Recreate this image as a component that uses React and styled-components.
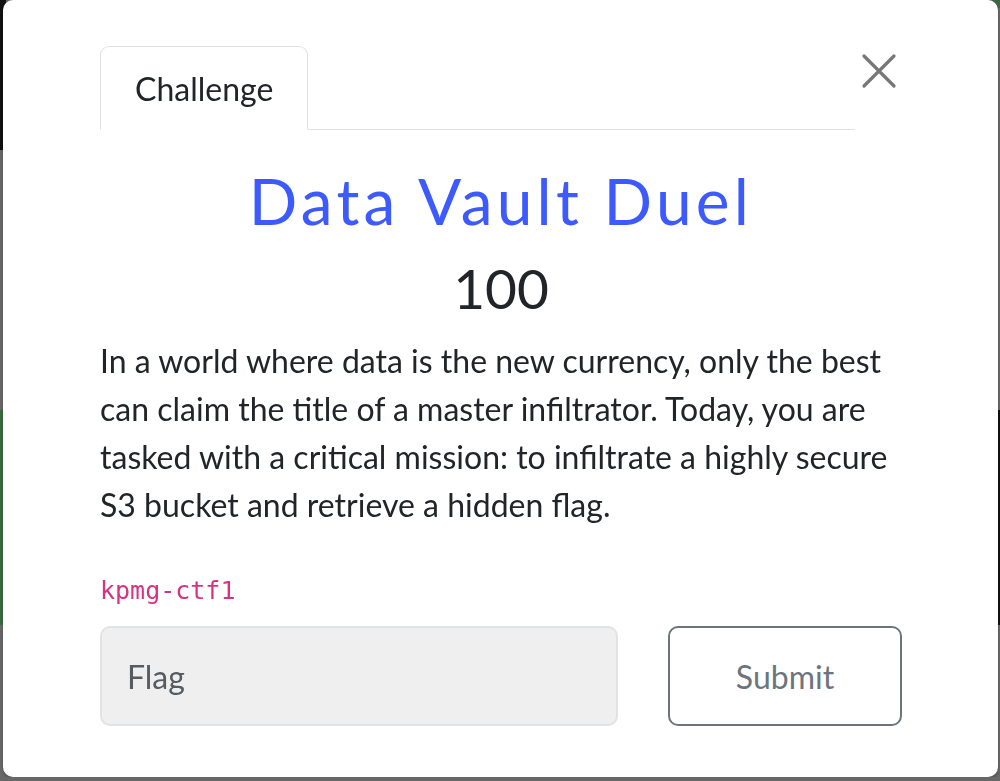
import styled, { createGlobalStyle } from 'styled-components'

const GlobalStyle = createGlobalStyle`
  html, body {
    margin: 0;
    padding: 0;
    background: #686868;
    overflow: hidden;
  }
  body {
    font-family: Lato, "Open Sans", sans-serif;
    color: #212529;
  }
`

// dimmed page behind the modal
const Backdrop = styled.div`
  position: fixed;
  inset: 0;
  z-index: 0;
`

const Strip = styled.div`
  position: absolute;
  left: ${(p) => p.$left}px;
  top: ${(p) => p.$top}px;
  width: ${(p) => p.$width}px;
  height: ${(p) => p.$height}px;
  background: ${(p) => p.$color};
`

const Modal = styled.div`
  position: relative;
  z-index: 1;
  box-sizing: border-box;
  width: 995px;
  height: 777px;
  margin-left: 3px;
  background: #fff;
  border-radius: 10px;
  padding: 46px 96px 0 97px;
  box-shadow: 0 2px 3px rgba(0, 0, 0, 0.25);
`

const Header = styled.div`
  display: flex;
  align-items: flex-start;
`

const Tabs = styled.div`
  flex: 1;
  display: flex;
  border-bottom: 1px solid #dee2e6;
`

const Tab = styled.div`
  box-sizing: border-box;
  height: 84px;
  padding: 0 34px;
  display: flex;
  align-items: center;
  font-size: 32px;
  color: #212529;
  border: 1px solid #dee2e6;
  border-bottom-color: #fff;
  border-radius: 9px 9px 0 0;
  margin-bottom: -1px;
`

const Close = styled.button`
  width: 47px;
  height: 50px;
  padding: 0;
  border: none;
  background: none;
  display: flex;
  align-items: center;
  justify-content: center;
`

const Title = styled.h1`
  margin: 33px 0 0;
  text-align: center;
  font-weight: 400;
  font-size: 64px;
  line-height: 76px;
  letter-spacing: 4.2px;
  color: #3d5afe;
`

const Points = styled.div`
  margin-top: 16px;
  text-align: center;
  font-size: 55px;
  line-height: 66px;
`

const Description = styled.p`
  margin: 16px 0 0;
  font-size: 32px;
  line-height: 48px;
`

const Code = styled.code`
  display: block;
  margin-top: 47px;
  font-family: "DejaVu Sans Mono", "Liberation Mono", monospace;
  font-size: 25px;
  line-height: 30px;
  color: #d63384;
`

const SubmitRow = styled.div`
  display: flex;
  gap: 50px;
  margin-top: 20px;
`

const FlagInput = styled.input`
  box-sizing: border-box;
  width: 518px;
  height: 100px;
  padding: 0 25px;
  background: #efefef;
  border: 2px solid #e0e3e6;
  border-radius: 10px;
  font-family: Lato, sans-serif;
  font-size: 32px;
  color: #495057;
  outline: none;

  &::placeholder {
    color: #555b61;
  }
`

const SubmitButton = styled.button`
  box-sizing: border-box;
  width: 234px;
  height: 100px;
  background: #fff;
  border: 2px solid #6c757d;
  border-radius: 10px;
  font-family: Lato, sans-serif;
  font-size: 32px;
  color: #6c757d;
`

const App = () => {
  return (
    <>
      <GlobalStyle />
      <Backdrop>
        <Strip $left={0} $top={0} $width={6} $height={150} $color="#111" />
        <Strip $left={0} $top={410} $width={6} $height={215} $color="#3b6a41" />
        <Strip $left={990} $top={0} $width={10} $height={8} $color="#3b6a41" />
        <Strip $left={996} $top={410} $width={4} $height={215} $color="#111" />
      </Backdrop>
      <Modal>
        <Header>
          <Tabs>
            <Tab>Challenge</Tab>
          </Tabs>
          <Close aria-label="Close">
            <svg width="36" height="36" viewBox="0 0 36 36">
              <path
                d="M3 3 L33 33 M33 3 L3 33"
                stroke="#777"
                strokeWidth="3.2"
                strokeLinecap="round"
              />
            </svg>
          </Close>
        </Header>
        <Title>Data Vault Duel</Title>
        <Points>100</Points>
        <Description>
          In a world where data is the new currency, only the best can claim
          the title of a master infiltrator. Today, you are tasked with a
          critical mission: to infiltrate a highly secure S3 bucket and
          retrieve a hidden flag.
        </Description>
        <Code>kpmg-ctf1</Code>
        <SubmitRow>
          <FlagInput placeholder="Flag" />
          <SubmitButton>Submit</SubmitButton>
        </SubmitRow>
      </Modal>
    </>
  )
}

export default App
